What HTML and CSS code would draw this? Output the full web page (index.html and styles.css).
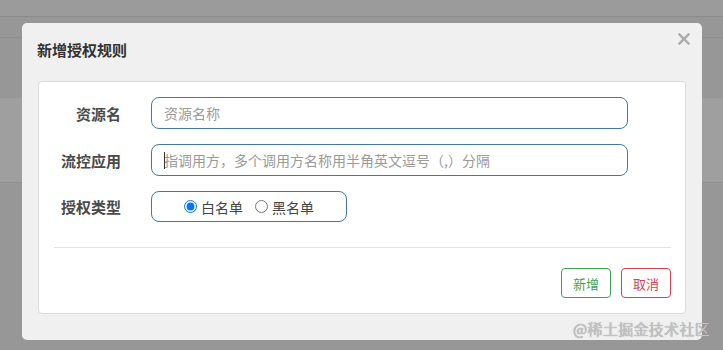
FILE: index.html
```html
<!DOCTYPE html>
<html lang="zh">
<head>
<meta charset="utf-8">
<link rel="stylesheet" href="styles.css">
</head>
<body>
<div class="page">
  <div class="topbar"></div>
  <div class="subbar"></div>
  <div class="gap"></div>
  <div class="band"></div>
</div>

<div class="modal">
  <div class="modal-head">
    <h3 class="modal-title">新增授权规则</h3>
    <span class="close">
      <svg width="12" height="12" viewBox="0 0 12 12"><path d="M1.5 1.5L10.5 10.5M10.5 1.5L1.5 10.5" stroke="#ababab" stroke-width="2.4" stroke-linecap="square"/></svg>
    </span>
  </div>
  <div class="card">
    <div class="form">
      <div class="row">
        <label class="label">资源名</label>
        <input class="field" type="text" placeholder="资源名称">
      </div>
      <div class="row">
        <label class="label">流控应用</label>
        <div class="field-wrap">
          <input class="field" type="text" placeholder="指调用方，多个调用方名称用半角英文逗号（,）分隔">
          <span class="caret"></span>
        </div>
      </div>
      <div class="row">
        <label class="label">授权类型</label>
        <div class="radio-box">
          <label class="radio"><input type="radio" name="t" checked><span>白名单</span></label>
          <label class="radio"><input type="radio" name="t"><span>黑名单</span></label>
        </div>
      </div>
    </div>
    <div class="divider"></div>
    <div class="actions">
      <button class="btn btn-add">新增</button>
      <button class="btn btn-cancel">取消</button>
    </div>
  </div>
</div>

<div class="watermark">@稀土掘金技术社区</div>
</body>
</html>
```

FILE: styles.css
```css
* { box-sizing: border-box; }
html, body { margin: 0; padding: 0; }
body {
  width: 723px;
  height: 350px;
  overflow: hidden;
  background: #979797;
  font-family: "Noto Sans CJK SC", "Noto Sans", sans-serif;
  position: relative;
}
.page { display: flex; flex-direction: column; }
.topbar { height: 17px; background: #9b9b9b; border-bottom: 1px solid #8b8b8b; }
.subbar { height: 21px; border-bottom: 1px solid #8e8e8e; }
.gap { height: 60px; }
.band { height: 85px; background: #9f9f9f; border-bottom: 1px solid #8e8e8e; }

.modal {
  position: absolute;
  left: 22px;
  top: 23px;
  width: 680px;
  height: 317px;
  background: #f0f0f0;
  border-radius: 5px;
  display: flex;
  flex-direction: column;
}
.modal-head {
  height: 58px;
  display: flex;
  align-items: flex-start;
  justify-content: space-between;
  padding: 0 12px 0 15px;
}
.modal-title {
  margin: 17px 0 0;
  font-size: 15px;
  line-height: 20px;
  font-weight: bold;
  color: #333;
}
.close { margin-top: 10px; display: flex; }
.card {
  margin: 0 16px 0 16px;
  height: 233px;
  background: #fff;
  border: 1px solid #dcdcdc;
  border-radius: 4px;
  padding: 15px 14px 0 0;
  display: flex;
  flex-direction: column;
}
.form { display: flex; flex-direction: column; gap: 15px; }
.row { display: flex; align-items: center; }
.label {
  width: 82px;
  margin-right: 30px;
  text-align: right;
  font-size: 15px;
  font-weight: bold;
  color: #4a4a4a;
}
.field, .field-wrap { width: 477px; }
.field-wrap { position: relative; }
.field {
  height: 32px;
  border: 1px solid #4677a3;
  border-radius: 8px;
  padding: 0 12px;
  font-family: inherit;
  font-size: 14px;
  color: #333;
  outline: none;
  background: #fff;
}
.field::placeholder { color: #9a9a9a; }
.caret {
  position: absolute;
  left: 13px;
  top: 8px;
  width: 1px;
  height: 17px;
  background: #333;
}
.radio-box {
  width: 196px;
  height: 31px;
  border: 1px solid #4677a3;
  border-radius: 8px;
  display: flex;
  align-items: center;
  justify-content: center;
  gap: 12px;
}
.radio {
  display: flex;
  align-items: center;
  font-size: 14px;
  color: #444;
}
.radio input {
  margin: 0 4px 0 0;
  width: 13px;
  height: 13px;
}
.divider {
  margin: 25px 0 0 15px;
  height: 1px;
  background: #e3e3e3;
}
.actions {
  display: flex;
  justify-content: flex-end;
  gap: 10px;
  margin-top: 20px;
}
.btn {
  width: 50px;
  height: 30px;
  background: #fff;
  border-radius: 4px;
  font-family: inherit;
  font-size: 13px;
  padding: 0;
  cursor: pointer;
}
.btn-add { border: 1px solid #3f9f55; color: #3f9f55; }
.btn-cancel { border: 1px solid #cf4453; color: #cf4453; }

.watermark {
  position: absolute;
  right: 13px;
  top: 318px;
  font-size: 15px;
  line-height: 22px;
  color: #c4c4c4;
  text-shadow: 0 0 1px #8a8a8a;
  letter-spacing: 0.3px;
}
```
